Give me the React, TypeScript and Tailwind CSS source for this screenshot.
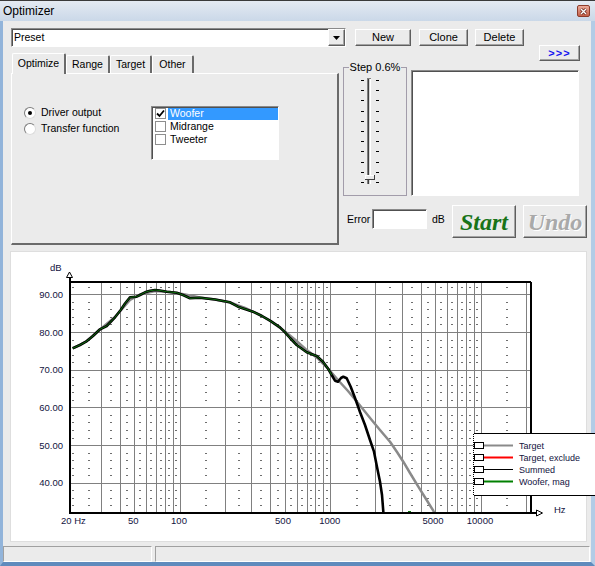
import React from 'react';

const FONT = "font-['Liberation_Sans',Arial,sans-serif]";
const SERIF = "font-['Liberation_Serif','Times_New_Roman',serif]";
const RAISED =
  'border border-t-white border-l-white border-r-[#5e5e5e] border-b-[#5e5e5e] shadow-[inset_-1px_-1px_0_#a3a3a3]';
const SUNKEN =
  'border border-t-[#8a8a8a] border-l-[#8a8a8a] border-r-white border-b-white shadow-[inset_1px_1px_0_#505050]';

function Button({ className = '', children }: { className?: string; children?: React.ReactNode }) {
  return (
    <div className={`flex items-center justify-center bg-[#ebebeb] ${RAISED} ${className}`}>{children}</div>
  );
}

function Radio({ checked, label }: { checked?: boolean; label: string }) {
  return (
    <div className="flex items-center h-[16px]">
      <div className="w-[12px] h-[12px] rounded-full bg-white border border-t-[#7d7d7d] border-l-[#7d7d7d] border-r-[#dcdcdc] border-b-[#dcdcdc] flex items-center justify-center">
        {checked && <div className="w-[4px] h-[4px] rounded-full bg-black" />}
      </div>
      <span className="ml-[5px] text-[10.5px]">{label}</span>
    </div>
  );
}

const drivers = [
  { name: 'Woofer', checked: true, selected: true },
  { name: 'Midrange' },
  { name: 'Tweeter' },
];

const tabs = [
  { label: 'Optimize', w: 'w-[54px]', active: true },
  { label: 'Range', w: 'w-[44px]' },
  { label: 'Target', w: 'w-[42px]' },
  { label: 'Other', w: 'w-[42px]' },
];

// chart scales (page pixel coordinates)
const fx = (f: number) => 179.5 + Math.log10(f / 100) * 150.5;
const fy = (db: number) => 294.3 + (90 - db) * 3.77;
const L = 69.5;
const R = 530.5;
const T = 282;
const B = 513;

const majorF = [
  30, 40, 50, 60, 70, 80, 90, 100, 200, 300, 400, 500, 600, 700, 800, 900, 1000, 2000, 3000, 4000, 5000, 6000,
  7000, 8000, 9000, 10000, 20000,
];
const minorX = [
  72.7,
  ...[25, 35, 45, 55, 65, 75, 85, 95, 150, 250, 350, 450, 550, 650, 750, 850, 950, 1500, 2500, 3500, 4500, 5500,
    6500, 7500, 8500, 9500, 15000].map(fx),
];
const minorDb = [34, 36, 38, 42, 44, 46, 48, 52, 54, 56, 58, 62, 64, 66, 68, 72, 74, 76, 78, 82, 84, 86, 88, 92];
const majorDb = [90, 80, 70, 60, 50, 40];

const summed: [number, number][] = [
  [72.7, 348.3], [80, 345], [86, 341.7], [93, 336], [100, 329.3], [106.7, 326], [115, 317.3], [120.7, 310],
  [125, 303.5], [130, 297.3], [136.7, 296.7], [140, 295], [145, 292.3], [150, 290.8], [155, 290], [160, 290.5],
  [166.7, 291.7], [176.7, 292.7], [183, 295], [190, 298.3], [200, 297.7], [215, 299.5], [230, 302.3],
  [238, 306.7], [253, 311.7], [262, 316], [270, 320.7], [280, 327.3], [285, 332.3], [290, 338], [296.7, 345],
  [306.7, 352.3], [316.7, 356], [323, 361.7], [328.3, 369], [331.7, 375], [335, 380.7], [338, 381.7],
  [341, 378], [343.3, 376.7], [346.7, 378.3], [350.7, 386.7], [355, 398], [360, 412], [365, 425], [370, 440],
  [374, 451.7], [377, 467], [380, 481.7], [382, 495], [383.5, 514],
];
const target: [number, number][] = [
  [72.7, 348.5], [86, 341.5], [100, 329.5], [115, 317], [130, 300], [140, 294.5], [155, 291], [170, 292],
  [185, 294.5], [200, 297.5], [215, 299.5], [230, 302.5], [245, 308], [260, 315], [272, 322], [285, 331.5],
  [296, 340.5], [306, 349.5], [318, 358.5], [328, 368.5], [338, 380], [348, 391], [358, 403], [371.7, 420],
  [380, 430], [390, 441.7], [397, 452], [403.3, 461.7], [410, 473], [418.3, 486.7], [426, 499],
  [433.3, 510.7], [435, 514],
];
const pts = (a: [number, number][]) => a.map(([x, y]) => `${x},${y}`).join(' ');

const legend = [
  { label: 'Target', color: '#8a8a8a', w: 2 },
  { label: 'Target, exclude', color: '#ff0000', w: 2 },
  { label: 'Summed', color: '#000000', w: 1 },
  { label: 'Woofer, mag', color: '#008000', w: 2 },
];

const xLabels: [string, number, 'start' | 'middle'][] = [
  ['20 Hz', 61, 'start'],
  ['50', 133.3, 'middle'],
  ['100', 179, 'middle'],
  ['500', 283, 'middle'],
  ['1000', 329.7, 'middle'],
  ['5000', 433, 'middle'],
  ['10000', 480, 'middle'],
];

function Chart() {
  const txt = '#12123e';
  return (
    <svg width="575" height="289" viewBox="11 252 575 289" className="block overflow-visible"
      fontFamily="'Liberation Sans', Arial, sans-serif">
      <defs>
        <clipPath id="plot">
          <rect x={L} y={T} width={R - L} height={B - T} />
        </clipPath>
      </defs>
      <g shapeRendering="crispEdges">
        {majorF.map((f) => (
          <line key={f} x1={Math.round(fx(f)) + 0.5} x2={Math.round(fx(f)) + 0.5} y1={T} y2={B} stroke="#808080" />
        ))}
        {majorDb.map((d) => (
          <line key={d} x1={L} x2={R} y1={Math.round(fy(d)) + 0.5} y2={Math.round(fy(d)) + 0.5} stroke="#808080" />
        ))}
        {minorX.map((x) =>
          minorDb.map((d) => (
            <rect key={`${x}-${d}`} x={Math.round(x) - 1} y={Math.round(fy(d))} width="2" height="1" fill="#6e6e6e" />
          )),
        )}
      </g>
      <g clipPath="url(#plot)" fill="none" strokeLinejoin="round">
        <polyline points={pts(target)} stroke="#8a8a8a" strokeWidth="2.5" />
        <polyline points={pts(summed)} stroke="#000" strokeWidth="2.6" />
        <polyline points={pts(summed.slice(0, 36))} stroke="#107a10" strokeWidth="0.9" />
        <line x1="408" x2="411" y1="512" y2="512" stroke="#0a7a0a" strokeWidth="2" />
      </g>
      <g fill="none" stroke="#000" strokeWidth="2" shapeRendering="crispEdges">
        <line x1={L} x2={R} y1={T} y2={T} />
        <line x1={R} x2={R} y1={T} y2={B} />
        <line x1={L} x2={L} y1="276" y2={B + 1} />
        <line x1={L} x2="537" y1={B} y2={B} />
      </g>
      <polygon points="66.5,277.5 72.5,277.5 69.5,272" fill="#fff" stroke="#000" strokeWidth="1" />
      <polygon points="536.5,510 536.5,516 542.5,513" fill="#fff" stroke="#000" strokeWidth="1" />

      <text x="50" y="270.7" fontSize="9.5" fill={txt}>dB</text>
      {majorDb.map((d) => (
        <text key={d} x="63" y={fy(d) + 3.5} fontSize="9.5" textAnchor="end" fill={txt}>
          {d.toFixed(2)}
        </text>
      ))}
      {xLabels.map(([t, x, a]) => (
        <text key={t} x={x} y="523.5" fontSize="9.5" textAnchor={a} fill={txt}>
          {t}
        </text>
      ))}
      <text x="554" y="513.3" fontSize="9.5" fill={txt}>Hz</text>

      <rect x="473.5" y="433.5" width="130" height="61.5" fill="#fff" />
      <g shapeRendering="crispEdges">
        <line x1="473.5" x2="604" y1="433.5" y2="433.5" stroke="#000" />
        <line x1="473.5" x2="604" y1="495.5" y2="495.5" stroke="#000" />
        <line x1="473.5" x2="473.5" y1="433.5" y2="495.5" stroke="#000" strokeDasharray="1 1" />
      </g>
      {legend.map((e, i) => {
        const y = 445.5 + i * 12;
        return (
          <g key={e.label}>
            <line x1="483.5" x2="513" y1={y} y2={y} stroke={e.color} strokeWidth={e.w} />
            <rect x="474.5" y={y - 3} width="9" height="6" fill="#fff" stroke="#000" strokeWidth="1" />
            <text x="519" y={y + 3.2} fontSize="9" fill={txt}>
              {e.label}
            </text>
          </g>
        );
      })}
    </svg>
  );
}

function Slider() {
  return (
    <svg width="26" height="112" viewBox="0 0 26 112" className="block">
      {Array.from({ length: 11 }).map((_, i) => {
        const y = Math.round(4 + i * 10.2);
        return (
          <g key={i} fill="#000">
            <rect x="4" y={y} width="3" height="1" />
            <rect x="19" y={y} width="3" height="1" />
          </g>
        );
      })}
      <rect x="10" y="2" width="4" height="106" fill="#d6d6d6" />
      <rect x="10" y="2" width="1" height="106" fill="#808080" />
      <rect x="11" y="2" width="1" height="106" fill="#404040" />
      <rect x="13" y="2" width="1" height="106" fill="#ffffff" />
      <rect x="10" y="2" width="4" height="1" fill="#808080" />
      <rect x="8" y="99" width="10" height="5" fill="#ebebeb" />
      <rect x="8" y="99" width="10" height="1" fill="#ffffff" />
      <rect x="8" y="99" width="1" height="5" fill="#ffffff" />
      <rect x="8" y="103" width="10" height="1" fill="#404040" />
      <rect x="17" y="99" width="1" height="5" fill="#404040" />
    </svg>
  );
}

export default function App() {
  return (
    <div className={`w-[595px] h-[566px] overflow-hidden flex flex-col text-black ${FONT}`}>
      {/* title bar */}
      <div className="h-[21px] shrink-0 border-t border-t-[#3a3a3a] bg-gradient-to-b from-[#e4eaf2] to-[#cad8e8] flex items-center justify-between pl-[3px] pr-[5px]">
        <span className="text-[12px] leading-none">Optimizer</span>
        <div className="w-[13px] h-[12px] rounded-[2px] border border-[#8c3b2a] bg-gradient-to-b from-[#eaa999] to-[#c35f48] flex items-center justify-center">
          <svg width="7" height="7" viewBox="0 0 7 7">
            <path d="M1 1l5 5M6 1l-5 5" stroke="#5a1a10" strokeWidth="2.6" />
            <path d="M1 1l5 5M6 1l-5 5" stroke="#fff" strokeWidth="1.4" />
          </svg>
        </div>
      </div>

      <div className="flex-1 min-h-0 flex flex-col bg-[#ebebeb] border-l-[3px] border-r-[4px] border-b-[4px] border-l-[#92b4da] border-r-[#b3cce6] border-b-[#5f8bbd]">
        {/* preset row */}
        <div className="pt-[7px] pl-[8px] flex items-start">
          <div className={`w-[335px] h-[19px] bg-white flex items-center ${SUNKEN}`}>
            <span className="flex-1 pl-[2px] text-[10.5px]">Preset</span>
            <div className={`w-[17px] h-full flex items-center justify-center bg-[#ebebeb] ${RAISED}`}>
              <svg width="7" height="4" viewBox="0 0 7 4">
                <path d="M0 0h7L3.5 4z" fill="#000" />
              </svg>
            </div>
          </div>
          <Button className="ml-[9px] mt-[1px] w-[56px] h-[17px] text-[11px]">New</Button>
          <Button className="ml-[8px] mt-[1px] w-[49px] h-[17px] text-[11px]">Clone</Button>
          <Button className="ml-[7px] mt-[1px] w-[49px] h-[17px] text-[11px]">Delete</Button>
        </div>

        {/* tabs + controls */}
        <div className="-mt-[2px] pl-[8px] flex">
          <div className="w-[328px] pt-[8px]">
            <div className="flex items-end h-[20px] pl-[1px]">
              {tabs.map((t) => (
                <div
                  key={t.label}
                  className={`${t.w} ${t.active ? 'h-[21px] -mb-px relative z-10' : 'h-[18px]'} bg-[#ebebeb] rounded-t-[2px] border-t border-l border-r-2 border-t-white border-l-white border-r-[#6a6a6a] flex items-center justify-center text-[10.5px]`}
                >
                  {t.label}
                </div>
              ))}
            </div>
            <div className="h-[172px] border-t border-l border-r-2 border-b-2 border-t-white border-l-white border-r-[#6a6a6a] border-b-[#6a6a6a] pt-[32px] flex items-start">
              <div className="ml-[12px] -mt-[1px] w-[127px]">
                <Radio checked label="Driver output" />
                <Radio label="Transfer function" />
              </div>
              <div className={`w-[128px] h-[54px] bg-white ${SUNKEN}`}>
                {drivers.map((d) => (
                  <div key={d.name} className="h-[13px] flex items-center pl-[3px] text-[10.5px]">
                    <div className="w-[11px] h-[11px] border border-[#8e8e8e] bg-white flex items-center justify-center">
                      {d.checked && (
                        <svg width="9" height="9" viewBox="0 0 9 9">
                          <path d="M1 4.5l2.5 2.5L8 1.5" fill="none" stroke="#000" strokeWidth="1.8" />
                        </svg>
                      )}
                    </div>
                    <div
                      className={`ml-[2px] w-[110px] h-[12px] flex items-center pl-[2px] ${d.selected ? 'bg-[#3399ff] text-white' : ''}`}
                    >
                      {d.name}
                    </div>
                  </div>
                ))}
              </div>
            </div>
          </div>

          <div className="ml-[4px] w-[244px] flex flex-col">
            <div className="h-[16px] flex">
              <Button className="ml-[196px] w-[41px] h-[16px] text-[11px] font-bold text-[#1414f0] tracking-[1px]">
                &gt;&gt;&gt;
              </Button>
            </div>
            <div className="flex items-start">
              <fieldset className="w-[64px] h-[135px] border border-[#a29caa]">
                <legend className="mx-auto px-[1px] text-[11px] leading-[12px]">Step 0.6%</legend>
                <div className="ml-[13px] mt-[3px]">
                  <Slider />
                </div>
              </fieldset>
              <div className={`ml-[4px] mt-[9px] w-[168px] h-[126px] bg-white ${SUNKEN}`} />
            </div>
            <div className="mt-[9px] flex items-start">
              <span className="ml-[4px] w-[25px] mt-[8px] text-[10.5px] leading-[12px]">Error</span>
              <div className={`mt-[4px] w-[55px] h-[20px] bg-white ${SUNKEN}`} />
              <span className="ml-[5px] w-[20px] mt-[8px] text-[10.5px] leading-[12px]">dB</span>
              <Button className={`w-[64px] h-[33px] ${SERIF} font-bold italic text-[24px] leading-none text-[#187318]`}>
                Start
              </Button>
              <Button
                className={`ml-[7px] w-[64px] h-[33px] ${SERIF} font-bold italic text-[24px] leading-none text-[#a9a9a9] [text-shadow:1px_1px_0_#ffffff]`}
              >
                Undo
              </Button>
            </div>
          </div>
        </div>

        {/* chart */}
        <div className="mt-[6px] ml-[7px] w-[577px] h-[291px] bg-white border border-[#dedede]">
          <Chart />
        </div>

        {/* status bar */}
        <div className="mt-[4px] h-[16px] flex">
          <div className="w-[149px] h-full border border-t-[#a0a0a0] border-l-[#a0a0a0] border-r-white border-b-white" />
          <div className="ml-[3px] w-[435px] h-full border border-t-[#a0a0a0] border-l-[#a0a0a0] border-r-white border-b-white" />
        </div>
      </div>
    </div>
  );
}
